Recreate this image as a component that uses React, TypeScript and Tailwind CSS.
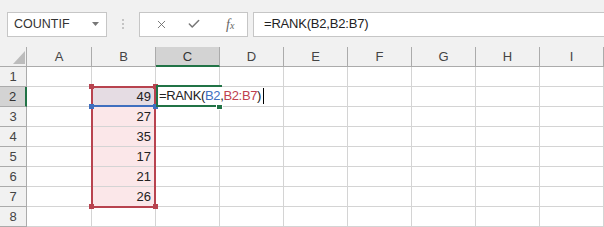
import { X, Check } from 'lucide-react';

const cols = ['A', 'B', 'C', 'D', 'E', 'F', 'G', 'H', 'I'];
const values: Record<number, string> = { 2: '49', 3: '27', 4: '35', 5: '17', 6: '21', 7: '26' };

const font = { fontFamily: '"Liberation Sans", Arial, sans-serif' };

function Formula() {
  return (
    <span className="whitespace-nowrap tracking-[-0.35px]">
      =RANK(<span className="text-[#3e6fbf]">B2</span>,<span className="text-[#c0404e]">B2:B7</span>)
    </span>
  );
}

export default function App() {
  return (
    <div className="w-[604px] h-[227px] overflow-hidden bg-[#f1f1f1] text-[#444]" style={font}>
      {/* formula bar */}
      <div className="flex items-center h-[47px] pt-[1px]">
        <div className="ml-[7px] w-[100px] h-[25px] bg-white border border-[#c6c6c6] flex items-center justify-between pl-[6px] pr-[7px] text-[12.5px] text-[#333]">
          <span>COUNTIF</span>
          <svg width="7" height="4" viewBox="0 0 7 4"><path d="M0 0h7L3.5 4z" fill="#777" /></svg>
        </div>
        <div className="w-[32px] flex flex-col items-center gap-[2px]">
          <span className="w-[2px] h-[2px] bg-[#c4c4c4]" />
          <span className="w-[2px] h-[2px] bg-[#c4c4c4]" />
          <span className="w-[2px] h-[2px] bg-[#c4c4c4]" />
        </div>
        <div className="w-[109px] h-[25px] bg-white border border-[#c6c6c6] flex items-center text-[#666]">
          <X size={13} strokeWidth={1.6} className="ml-[15px]" />
          <Check size={14} strokeWidth={2.6} className="ml-[19px] text-[#777]" />
          <span className="ml-[25px] italic text-[14px] text-[#666]" style={{ fontFamily: '"Liberation Serif", serif' }}>
            f<span className="text-[10px]">x</span>
          </span>
        </div>
        <div className="ml-[5px] flex-1 h-[25px] bg-white border border-[#c6c6c6] border-r-0 flex items-center pl-[10px] text-[13px] text-[#222]">
          <span className="tracking-[-0.2px]">=RANK(B2,B2:B7)</span>
        </div>
      </div>

      {/* grid */}
      <div className="relative">
        <div className="grid grid-cols-[27px_65px_repeat(8,64px)] auto-rows-[20px] bg-white">
          <div className="h-[20px] bg-[#f1f1f1] border-r border-b border-[#ababab] relative">
            <svg className="absolute left-[13px] top-[4px]" width="12" height="13" viewBox="0 0 12 13">
              <path d="M12 0V13H0z" fill="#bcbcbc" />
            </svg>
          </div>
          {cols.map((c) => (
            <div
              key={c}
              className={
                c === 'C'
                  ? 'h-[20px] bg-[#d3d3d3] border-r border-[#ababab] border-b-2 border-b-[#217346] flex items-center justify-center text-[13px] text-[#333]'
                  : 'h-[20px] bg-[#f1f1f1] border-r border-b border-[#ababab] flex items-end justify-center pb-[1px] text-[13px] text-[#444]'
              }
            >
              <span className="relative top-[1px]">{c}</span>
            </div>
          ))}
          {[1, 2, 3, 4, 5, 6, 7, 8].map((r) => (
            <Row key={r} r={r} />
          ))}
        </div>

        {/* B2:B7 reference */}
        <div className="absolute left-[91px] top-[39px] w-[65px] h-[122px] border-2 border-[#b8434f]" />
        <div className="absolute left-[91px] top-[58px] w-[65px] h-[2px] bg-[#3e6fbf]" />
        <span className="absolute left-[89px] top-[37px] w-[5px] h-[5px] bg-[#b8434f]" />
        <span className="absolute left-[153px] top-[37px] w-[5px] h-[5px] bg-[#b8434f]" />
        <span className="absolute left-[89px] top-[157px] w-[5px] h-[5px] bg-[#b8434f]" />
        <span className="absolute left-[153px] top-[157px] w-[5px] h-[5px] bg-[#b8434f]" />
        <span className="absolute left-[89px] top-[57px] w-[5px] h-[5px] bg-[#3e6fbf]" />
        <span className="absolute left-[153px] top-[57px] w-[5px] h-[5px] bg-[#3e6fbf]" />

        {/* active cell C2 */}
        <div className="absolute left-[156px] top-[38px] w-[66px] h-[2px] bg-[#217346]" />
        <div className="absolute left-[156px] top-[58px] w-[62px] h-[2px] bg-[#217346]" />
        <div className="absolute left-[156px] top-[38px] w-[2px] h-[22px] bg-[#217346]" />
        <span className="absolute left-[217px] top-[57px] w-[5px] h-[5px] bg-[#217346] border border-white box-content -translate-x-[1px] -translate-y-[1px]" />
        <div className="absolute left-[159px] top-[40px] h-[18px] bg-white flex items-center text-[13px] text-[#222] pr-[2px]">
          <Formula />
          <span className="ml-[2px] w-[1px] h-[16px] bg-black" />
        </div>
      </div>
    </div>
  );
}

function Row({ r }: { r: number }) {
  return (
    <>
      <div
        className={
          r === 2
            ? 'bg-[#d3d3d3] border-r-2 border-r-[#217346] border-b border-[#ababab] flex items-center justify-center text-[13px] text-[#333]'
            : 'bg-[#f1f1f1] border-r border-b border-[#ababab] flex items-center justify-center text-[13px] text-[#444]'
        }
      >
        {r}
      </div>
      {cols.map((c) => {
        let cls = 'border-r border-b border-[#d4d4d4] flex items-center justify-end pr-[4px] text-[13px] text-[#222]';
        if (c === 'B' && r === 2) cls += ' bg-[#e5dce3]';
        else if (c === 'B' && r >= 3 && r <= 7) cls += ' bg-[#fbe7e9]';
        return (
          <div key={c} className={cls}>
            {c === 'B' ? values[r] : ''}
          </div>
        );
      })}
    </>
  );
}
